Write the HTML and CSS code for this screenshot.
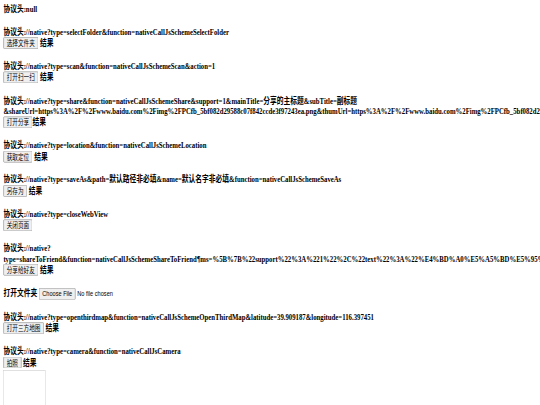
FILE: index.html
```html
<!DOCTYPE html>
<html lang="zh">
<head>
    <meta charset="UTF-8">
    <title>协议测试</title>
    <link rel="stylesheet" href="styles.css">
</head>
<body>
    <div class="page">
        <h4 class="proto first">协议头:null</h4>

        <h4 class="proto">协议头://native?type=selectFolder&amp;function=nativeCallJsSchemeSelectFolder</h4>
        <div class="row"><button class="act">选择文件夹</button> <span class="result">结果</span></div>

        <h4 class="proto">协议头://native?type=scan&amp;function=nativeCallJsSchemeScan&amp;action=1</h4>
        <div class="row"><button class="act">打开扫一扫</button> <span class="result">结果</span></div>

        <h4 class="proto">协议头://native?type=share&amp;function=nativeCallJsSchemeShare&amp;support=1&amp;mainTitle=分享的主标题&amp;subTitle=副标题&amp;shareUrl=https%3A%2F%2Fwww.baidu.com%2Fimg%2FPCfb_5bf082d29588c07f842ccde3f97243ea.png&amp;thumUrl=https%3A%2F%2Fwww.baidu.com%2Fimg%2FPCfb_5bf082d29588c07f842ccde3f97243ea.png</h4>
        <div class="row"><button class="act">打开分享</button><span class="result">结果</span></div>

        <h4 class="proto">协议头://native?type=location&amp;function=nativeCallJsSchemeLocation</h4>
        <div class="row"><button class="act">获取定位</button> <span class="result">结果</span></div>

        <h4 class="proto">协议头://native?type=saveAs&amp;path=默认路径非必填&amp;name=默认名字非必填&amp;function=nativeCallJsSchemeSaveAs</h4>
        <div class="row"><button class="act">另存为</button> <span class="result">结果</span></div>

        <h4 class="proto">协议头://native?type=closeWebView</h4>
        <div class="row"><button class="act">关闭页面</button></div>

        <h4 class="proto">协议头://native?type=shareToFriend&amp;function=nativeCallJsSchemeShareToFriend&para;ms=%5B%7B%22support%22%3A%221%22%2C%22text%22%3A%22%E4%BD%A0%E5%A5%BD%E5%95%8A%22%7D%5D</h4>
        <div class="row"><button class="act">分享给好友</button> <span class="result">结果</span></div>

        <h4 class="proto">打开文件夹 <input type="file" class="picker"></h4>

        <h4 class="proto">协议头://native?type=openthirdmap&amp;function=nativeCallJsSchemeOpenThirdMap&amp;latitude=39.909187&amp;longitude=116.397451</h4>
        <div class="row"><button class="act">打开三方地图</button> <span class="result">结果</span></div>

        <h4 class="proto">协议头://native?type=camera&amp;function=nativeCallJsCamera</h4>
        <div class="row"><button class="act">拍照</button> <span class="result">结果</span></div>
        <div class="photo"></div>
    </div>
</body>
</html>
```

FILE: styles.css
```css
html, body {
    margin: 0;
    height: 405px;
    overflow: hidden;
    background-color: #fff;
}

/* page was laid out for a 1280x720 screen, squeezed into the window */
.page {
    width: 1264px;
    padding: 8px;
    transform: scale(0.421875, 0.5625);
    transform-origin: 0 0;
    font-family: "Liberation Serif", "Noto Sans CJK SC", serif;
    font-size: 16px;
    line-height: 18.4px;
    color: #000;
}

.proto {
    font-size: 16px;
    line-height: 18.4px;
    font-weight: bold;
    margin: 21.6px 0 0;
}

.proto.first {
    margin-top: 0;
}

.row {
    font-size: 16px;
    line-height: 18.4px;
}

.act {
    font-family: "Noto Sans CJK SC", sans-serif;
    font-size: 13.33px;
    line-height: 15px;
}

.result {
    font-weight: bold;
}

.picker {
    font-family: "Liberation Sans", "Noto Sans", sans-serif;
    font-size: 13.33px;
    line-height: 15px;
    font-weight: normal;
}

.photo {
    width: 98px;
    height: 120px;
    margin-top: 3px;
    border: 1px solid #c8c8c8;
}
```
